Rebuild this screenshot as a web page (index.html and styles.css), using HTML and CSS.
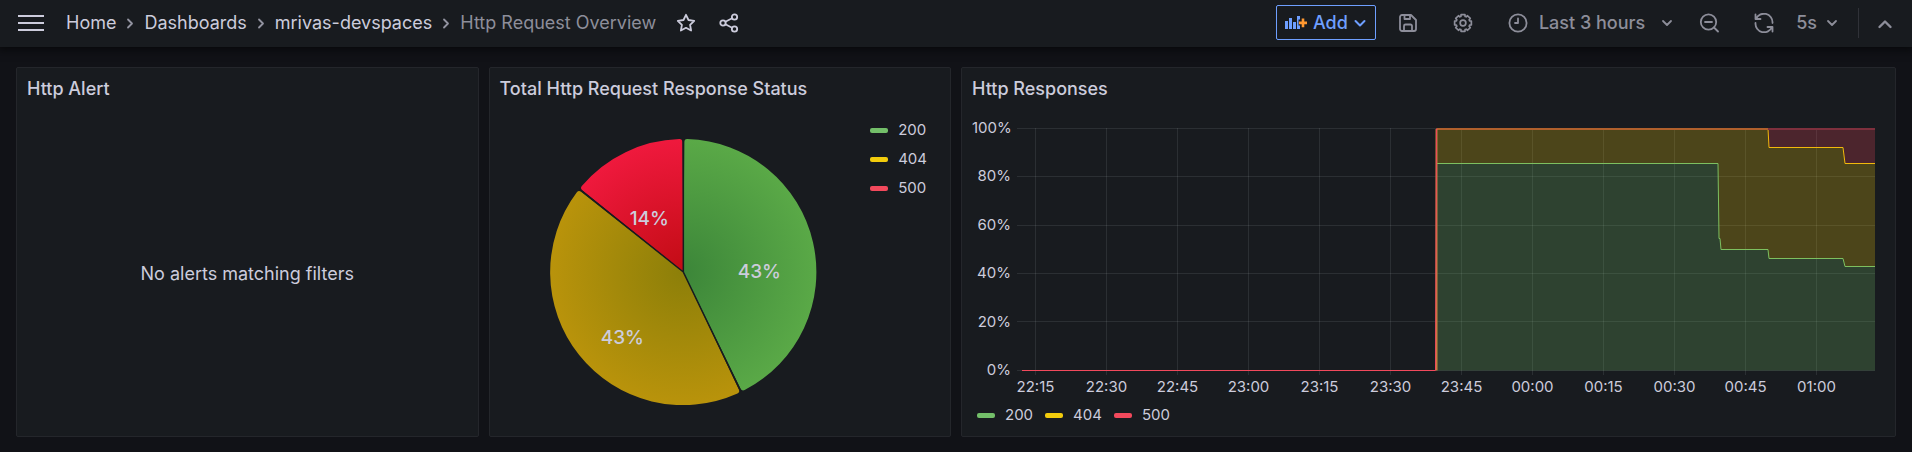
FILE: index.html
```html
<!DOCTYPE html>
<html lang="en">
<head>
<meta charset="utf-8">
<meta name="viewport" content="width=device-width, initial-scale=1">
<title>Http Request Overview</title>
<link rel="stylesheet" href="styles.css">
</head>
<body>
<header class="topbar">
  <button class="icon-btn menu-btn" aria-label="Menu"><svg width="26" height="20" viewBox="0 0 26 20"><path d="M0 3h26M0 10h26M0 17h26" stroke-width="2"/></svg></button>
  <nav class="crumbs" aria-label="Breadcrumbs">
    <a href="#home">Home</a>
    <svg class="sep" width="12" height="12" viewBox="0 0 12 12"><path d="M4 2.500l4 4-4 4"/></svg>
    <a href="#dashboards">Dashboards</a>
    <svg class="sep" width="12" height="12" viewBox="0 0 12 12"><path d="M4 2.500l4 4-4 4"/></svg>
    <a href="#folder">mrivas-devspaces</a>
    <svg class="sep" width="12" height="12" viewBox="0 0 12 12"><path d="M4 2.500l4 4-4 4"/></svg>
    <span class="current">Http Request Overview</span>
  </nav>
  <div class="page-actions">
    <button class="icon-btn" aria-label="Star"><svg width="20" height="20" viewBox="0 0 20 20"><path d="M10 1.800l2.500 5.200 5.700.800-4.100 4 1 5.700-5.100-2.700-5.100 2.700 1-5.700-4.100-4 5.700-.800z"/></svg></button>
    <button class="icon-btn" aria-label="Share"><svg width="20" height="20" viewBox="0 0 20 20"><circle cx="4" cy="10" r="2.700"/><circle cx="15.500" cy="4" r="2.700"/><circle cx="15.500" cy="16" r="2.700"/><path d="M6.400 8.700l6.700-3.400M6.400 11.300l6.700 3.400"/></svg></button>
  </div>
  <div class="toolbar">
    <button class="add-btn"><svg width="22" height="14" viewBox="0 0 22 14"><path class="fill-blue" d="M0 5h3v8H0zM4 2h3v11H4zM8 6h3v7H8zM12 0h3v3.500h-1.500v6H15V13h-3z"/><path class="fill-orange" d="M16.700 2.500h2.600v3H22v2.700h-2.700v3h-2.600v-3H14V5.500h2.700z"/></svg><span>Add</span><svg width="12" height="12" viewBox="0 0 12 12"><path d="M1.500 4l4.500 4.500 4.500-4.500" stroke-width="2"/></svg></button>
    <button class="icon-btn muted" aria-label="Save"><svg width="20" height="20" viewBox="0 0 20 20"><path d="M4 2h9l5 5v9a2 2 0 0 1-2 2H4a2 2 0 0 1-2-2V4a2 2 0 0 1 2-2zM6.500 2v4H12V2M6 18v-5a1.500 1.500 0 0 1 1.500-1.500h5A1.500 1.500 0 0 1 14 13v5"/></svg></button>
    <button class="icon-btn muted" aria-label="Settings"><svg width="20" height="20" viewBox="-10.500 -10.500 21 21"><circle r="3"/><path d="M-2.020-8.770H2.020L2.200-6.960 3.370-6.480 4.770-7.630 7.630-4.770 6.480-3.370 6.960-2.200 8.770-2.020V2.020L6.960 2.200 6.480 3.370 7.630 4.770 4.770 7.630 3.370 6.480 2.200 6.960 2.020 8.770H-2.020L-2.200 6.960-3.370 6.480-4.770 7.630-7.630 4.770-6.480 3.370-6.960 2.200-8.770 2.020V-2.020L-6.960-2.200-6.480-3.370-7.630-4.770-4.770-7.630-3.370-6.480-2.200-6.960Z"/></svg></button>
    <button class="time-btn muted"><svg width="20" height="20" viewBox="0 0 20 20"><circle cx="10" cy="10" r="8.600"/><path d="M10 5.500V10H7"/></svg><span>Last 3 hours</span><svg class="chev" width="12" height="12" viewBox="0 0 12 12"><path d="M2 4l4 4 4-4"/></svg></button>
    <button class="icon-btn muted" aria-label="Zoom out"><svg width="20" height="20" viewBox="0 0 20 20"><circle cx="9.500" cy="9" r="7.700"/><path d="M15 14.500l4 4M6 9h7"/></svg></button>
    <button class="icon-btn muted sync" aria-label="Refresh"><svg width="20" height="20" viewBox="0 0 20 20"><path d="M1.500 1.500v4.500h5M2 6a8.600 8.600 0 0 1 16.500 4M18.500 18.500V14h-5M18 14A8.600 8.600 0 0 1 1.500 10"/></svg></button>
    <button class="rate-btn muted"><span>5s</span><svg class="chev" width="12" height="12" viewBox="0 0 12 12"><path d="M2 4l4 4 4-4"/></svg></button>
    <span class="divider"></span>
    <button class="icon-btn muted collapse" aria-label="Collapse"><svg width="20" height="20" viewBox="0 0 20 20"><path d="M4.500 14l5.500-5.500 5.500 5.500" stroke-width="2.400"/></svg></button>
  </div>
</header>
<main class="grid">
  <section class="panel">
    <h2>Http Alert</h2>
    <div class="empty">No alerts matching filters</div>
  </section>
  <section class="panel">
    <h2>Total Http Request Response Status</h2>
    <div class="pie-body">
      <svg class="pie" viewBox="-133 -133 266 266" role="img" aria-label="Response status shares">
        <defs>
          <radialGradient id="g" gradientUnits="userSpaceOnUse" cx="0" cy="0" r="133"><stop offset="0" stop-color="#3c8639"/><stop offset="1" stop-color="#5aa947"/></radialGradient>
          <radialGradient id="y" gradientUnits="userSpaceOnUse" cx="0" cy="0" r="133"><stop offset="0" stop-color="#8c7f09"/><stop offset="1" stop-color="#b9930b"/></radialGradient>
          <radialGradient id="r" gradientUnits="userSpaceOnUse" cx="0" cy="0" r="133"><stop offset="0" stop-color="#c20c14"/><stop offset="1" stop-color="#ef193d"/></radialGradient>
        </defs>
        <path fill="url(#g)" d="M0 0L1-130Q1-133 4-132.900A133 133 0 0 1 61.310 118.090Q58.610 119.400 57.300 116.700Z"/>
        <path fill="url(#y)" d="M0 0L55.500 117.560Q56.810 120.260 54.110 121.570A133 133 0 0 1-106.470-79.790Q-104.600-82.140-102.260-80.270Z"/>
        <path fill="url(#r)" d="M0 0L-101.020-81.830Q-103.360-83.700-101.490-86.050A133 133 0 0 1-4-132.900Q-1-133-1-130Z"/>
        <path class="seam" d="M0-133V0L57.710 119.830M0 0L-103.980-82.920"/>
        <text x="76" y="6">43%</text><text x="-34" y="-47">14%</text><text x="-61" y="72">43%</text>
      </svg>
      <ul class="legend column">
        <li><i class="swatch green"></i>200</li>
        <li><i class="swatch yellow"></i>404</li>
        <li><i class="swatch red"></i>500</li>
      </ul>
    </div>
  </section>
  <section class="panel wide">
    <h2>Http Responses</h2>
    <div class="chart">
      <div class="y-axis"><span>100%</span><span>80%</span><span>60%</span><span>40%</span><span>20%</span><span>0%</span></div>
      <svg class="plot" viewBox="0 0 858 247" preserveAspectRatio="none" role="img" aria-label="Http responses over time">
        <path class="gridline" d="M0 .5H858M0 48.500H858M0 97.500H858M0 145.500H858M0 193.500H858M0 242.500H858M18.500 0V247M89.500 0V247M160.500 0V247M231.500 0V247M302.500 0V247M373.500 0V247M444.500 0V247M515.500 0V247M586.500 0V247M657.500 0V247M728.500 0V247M799.500 0V247"/>
        <path class="area-green" d="M419 242.500V35.500H701L702 110.500H703L704 121.500H751L752 130.500H826L828 138.500H858V242.500Z"/>
        <path class="area-yellow" d="M419 35.500V.5H751L752 19.500H826L828 35.500H858V138.500H828L826 130.500H752L751 121.500H704L703 110.500H702L701 35.500Z"/>
        <path class="area-red" d="M751 .5H858V35.500H828L826 19.500H752Z"/>
        <path class="green-line" d="M420 35.500H701L702 110.500H703L704 121.500H751L752 130.500H826L828 138.500H858"/>
        <path class="yellow-line" d="M751 .5L752 19.500H826L828 35.500H858"/>
        <path class="top-orange" d="M420 1H751"/>
        <path class="top-red" d="M751 1H858"/>
        <path class="rise" d="M419.500 242.500V1"/>
        <path class="red-line" d="M5 242.500H418.500L419.500 .5"/>
      </svg>
      <div class="x-axis"><span>22:15</span><span>22:30</span><span>22:45</span><span>23:00</span><span>23:15</span><span>23:30</span><span>23:45</span><span>00:00</span><span>00:15</span><span>00:30</span><span>00:45</span><span>01:00</span></div>
    </div>
    <ul class="legend row">
      <li><i class="swatch green"></i>200</li>
      <li><i class="swatch yellow"></i>404</li>
      <li><i class="swatch red"></i>500</li>
    </ul>
  </section>
</main>
</body>
</html>
```
FILE: styles.css
```css
* { box-sizing: border-box; }
body {
  margin: 0;
  min-height: 100vh;
  background: #111217;
  color: #ccccdc;
  font: 400 18px/24px Inter, sans-serif;
}
button {
  display: flex;
  align-items: center;
  padding: 0;
  border: 0;
  background: none;
  color: inherit;
  font: inherit;
  cursor: pointer;
}
svg { flex: none; display: block; }
button svg, .sep { fill: none; stroke: currentColor; stroke-width: 1.8; stroke-linecap: round; stroke-linejoin: round; }
a { color: inherit; text-decoration: none; }
.topbar {
  position: relative;
  display: flex;
  align-items: center;
  height: 47px;
  padding: 0 17px 2px 18px;
  background: #181b1f;
  box-shadow: 0 1px 8px 2px #08090b;
}
.menu-btn svg { stroke-linecap: butt; }
.crumbs { display: flex; align-items: center; gap: 8px; margin-left: 22px; white-space: nowrap; }
.sep { color: #9293a0; }
.current, .muted { color: #8d8e9a; }
.page-actions { display: flex; gap: 23px; margin-left: 20px; }
.toolbar { display: flex; align-items: center; margin-left: auto; white-space: nowrap; }
.add-btn {
  height: 35px;
  margin-right: 22px;
  padding: 0 9px 0 8px;
  gap: 6px;
  border: 1px solid #6e9fff;
  border-radius: 2px;
  color: #6e9fff;
  font-weight: 500;
}
.add-btn .fill-blue { fill: #6e9fff; stroke: none; }
.add-btn .fill-orange { fill: #ff9830; stroke: none; }
.toolbar .icon-btn { margin-right: 35px; }
.time-btn { gap: 11px; margin-right: 26px; font-weight: 500; }
.time-btn .chev { margin-left: 5px; }
.toolbar .sync { margin-right: 22px; }
.rate-btn { gap: 9px; font-weight: 500; }
.divider { width: 1px; height: 30px; margin: 0 16px 0 20px; background: #303238; }
.toolbar .collapse { margin-right: 0; }
.grid { display: grid; grid-template-columns: repeat(4, 1fr); gap: 10px; padding: 20px 16px 15px; }
.panel {
  display: flex;
  flex-direction: column;
  min-width: 0;
  min-height: 370px;
  border: 1px solid #24262b;
  border-radius: 2px;
  background: #181b1f;
}
.wide { grid-column: span 2; }
h2 { margin: 0; padding: 9px 10px; font-size: 18px; line-height: 24px; font-weight: 500; }
.empty { flex: 1; display: flex; align-items: center; justify-content: center; padding-top: 1px; }
.pie-body { flex: 1; display: flex; }
.pie { flex: 1; min-width: 0; height: 266px; margin: 29px 0 0 10px; }
.pie text { fill: #ccccdc; font-size: 19px; font-weight: 500; text-anchor: middle; }
.seam { fill: none; stroke: #181b1f; stroke-width: 1.5; }
.legend { display: flex; margin: 0; padding: 0; list-style: none; font-size: 15px; line-height: 20px; }
.legend li { display: flex; align-items: center; gap: 10px; }
.column { flex-direction: column; gap: 9px; margin: 10px 23px 0 4px; }
.row { gap: 12px; margin: 8px 15px 0; }
.swatch { width: 18px; height: 5px; border-radius: 2px; }
.green { background: #73bf69; }
.yellow { background: #f2cc0c; }
.red { background: #f2495c; }
.chart {
  display: grid;
  grid-template-columns: 39px 1fr;
  column-gap: 6px;
  margin: 18px 20px 0 10px;
  font-size: 15px;
  line-height: 20px;
}
.y-axis { display: flex; flex-direction: column; justify-content: space-between; height: 262px; margin-top: -10px; text-align: right; }
.plot { width: 100%; height: 247px; }
.x-axis { grid-column: 1 / -1; display: grid; grid-template-columns: repeat(12, 1fr); margin: -3px 23px 0 28px; text-align: center; }
.plot path { fill: none; vector-effect: non-scaling-stroke; }
.plot .gridline { stroke: #f0faff; stroke-opacity: .09; }
.plot .area-green { fill: #73bf69; fill-opacity: .24; }
.plot .area-yellow { fill: #f2cc0c; fill-opacity: .24; }
.plot .area-red { fill: #f2495c; fill-opacity: .24; }
.green-line { stroke: #7dc060; }
.yellow-line { stroke: #f2b90c; }
.red-line { stroke: #f2495c; }
.top-orange { stroke: #b0602c; stroke-width: 2; }
.top-red { stroke: #7e303d; stroke-width: 2; }
.rise { stroke: #c78040; stroke-width: 2; }
```
